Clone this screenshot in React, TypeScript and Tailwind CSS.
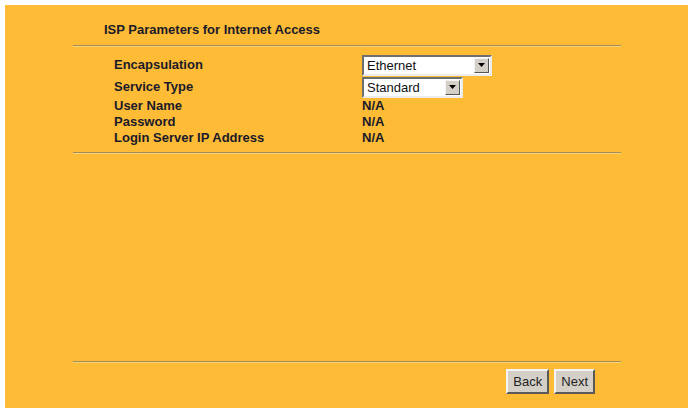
const rows = [
  { label: 'User Name', value: 'N/A' },
  { label: 'Password', value: 'N/A' },
  { label: 'Login Server IP Address', value: 'N/A' },
];

function FakeSelect({ value, width }: { value: string; width: string }) {
  return (
    <div
      className={`flex h-[21px] items-stretch border-2 border-t-[#6f6f6f] border-l-[#6f6f6f] border-r-[#ececec] border-b-[#ececec] bg-white font-normal ${width}`}
    >
      <span className="flex-1 pl-[3px] text-[13px] leading-[17px] text-[#111]">{value}</span>
      <span className="m-[1px] flex w-[15px] items-center justify-center border border-t-[#f4f4f4] border-l-[#f4f4f4] border-r-[#555] border-b-[#555] bg-[#d4d0c8]">
        <svg width="7" height="4" viewBox="0 0 7 4">
          <path d="M0 0h7L3.5 4z" fill="#000" />
        </svg>
      </span>
    </div>
  );
}

function Rule() {
  return <div className="h-[2px] border-t border-t-[#a48a5a] border-b border-b-[#f7d27c]" />;
}

function Btn({ children }: { children: string }) {
  return (
    <button className="h-[25px] border-2 border-t-[#f4f4f4] border-l-[#f4f4f4] border-r-[#5a5a5a] border-b-[#5a5a5a] bg-[#d4d0c8] px-[5px] text-[13px] text-[#222]">
      {children}
    </button>
  );
}

export default function App() {
  return (
    <div className="h-[412px] w-[695px] bg-white p-[5px] pr-[7px] pb-[4px] font-['Liberation_Sans',Arial,sans-serif]">
      <div className="flex h-full flex-col bg-[#fdbb36] pl-[68px] pr-[67px]">
        <div className="pl-[31px] pt-[17px] text-[13px] font-bold leading-[15px] text-[#1a1a2a]">
          ISP Parameters for Internet Access
        </div>
        <div className="mt-[8px]">
          <Rule />
        </div>
        <div className="grid grid-cols-[248px_1fr] pl-[41px] pt-[7px] text-[13px] font-bold text-[#1a1a2a]">
          <div className="flex h-[22px] items-center">Encapsulation</div>
          <div className="flex h-[22px] items-center">
            <FakeSelect value="Ethernet" width="w-[130px]" />
          </div>
          <div className="flex h-[22px] items-center">Service Type</div>
          <div className="flex h-[22px] items-center">
            <FakeSelect value="Standard" width="w-[101px]" />
          </div>
          {rows.map((r) => (
            <div key={r.label} className="contents">
              <div className="h-[16px] leading-[16px]">{r.label}</div>
              <div className="h-[16px] leading-[16px]">{r.value}</div>
            </div>
          ))}
        </div>
        <div className="mt-[6px]">
          <Rule />
        </div>
        <div className="flex-1" />
        <Rule />
        <div className="flex justify-end gap-[5px] pr-[26px] pt-[6px] pb-[14px]">
          <Btn>Back</Btn>
          <Btn>Next</Btn>
        </div>
      </div>
    </div>
  );
}
